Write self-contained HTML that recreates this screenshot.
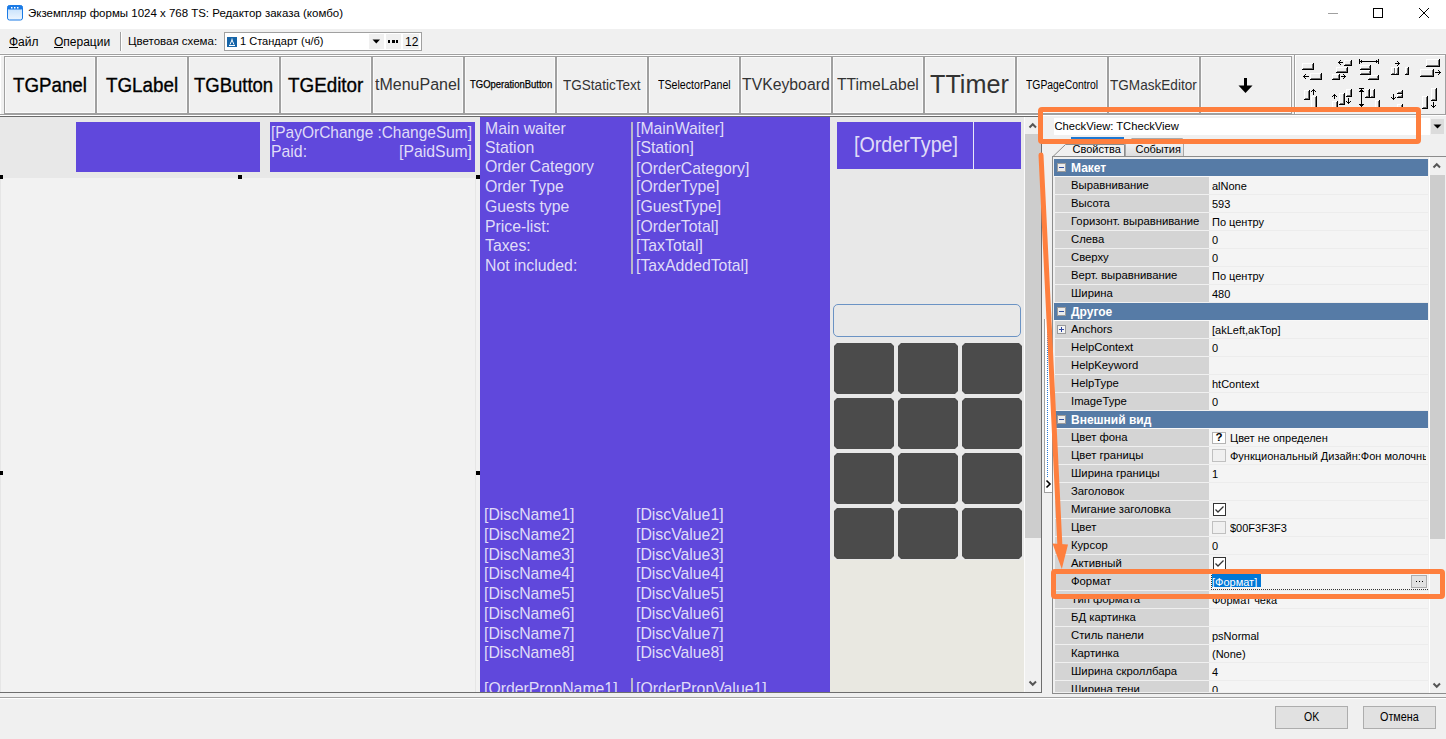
<!DOCTYPE html>
<html><head><meta charset="utf-8">
<style>
*{box-sizing:border-box}
html,body{margin:0;padding:0}
body{width:1446px;height:739px;overflow:hidden;position:relative;background:#f0f0f0;font-family:"Liberation Sans",sans-serif;color:#000}
.a{position:absolute}
.t{position:absolute;white-space:pre;line-height:1}
.tb{position:absolute;top:56px;height:58px;width:92px;border:1px solid #a0a0a0;background:#f0f0f0;box-shadow:inset 0 0 0 1px #fafafa}
.tb span{position:absolute;left:0;right:0;text-align:center;white-space:pre;line-height:1}
.pw{color:#fff;font-size:16px;letter-spacing:-0.25px}
.ins{font-size:11px}
.row{position:absolute;left:1055px;width:373px;height:18px}
.row .n{position:absolute;left:0;top:0;width:154px;height:17px;background:#d4d4d4}
.row .v{position:absolute;left:154px;top:0;width:219px;height:17px;background:#f4f4f4}
.row .ln{position:absolute;left:0;top:17px;width:154px;height:1px;background:#f0f0f0}
.row .lv{position:absolute;left:154px;top:17px;width:219px;height:1px;background:#ececec}
.row .nt{position:absolute;left:16px;top:2.6px;font-size:11.3px;white-space:pre;line-height:1}
.row .vt{position:absolute;left:157px;top:3.6px;font-size:11px;white-space:pre;line-height:1}
.hdr{position:absolute;left:1054px;width:374px;height:17px;background:#567ba6}
.hdr .bx{position:absolute;left:3px;top:4px;width:9px;height:9px;background:#ececec;border:1px solid #9a9a9a}
.hdr .bx:after{content:"";position:absolute;left:1px;top:3px;width:5px;height:1px;background:#3050a0}
.hdr span{position:absolute;left:17px;top:3px;color:#fff;font-weight:bold;font-size:12px;white-space:pre;line-height:1}
.btn{position:absolute;background:#4b4b4b;width:60px;height:51px;clip-path:polygon(3px 0,57px 0,60px 3px,60px 48px,57px 51px,3px 51px,0 48px,0 3px)}
</style></head><body>

<!-- title bar -->
<div class="a" style="left:0;top:0;width:1446px;height:29px;background:#fff"></div>
<svg class="a" style="left:7px;top:5px" width="17" height="16" viewBox="0 0 17 16">
  <defs><linearGradient id="ig" x1="0" y1="0" x2="0" y2="1"><stop offset="0" stop-color="#bcdcfb"/><stop offset="1" stop-color="#eef6ff"/></linearGradient></defs>
  <rect x="0.5" y="0.5" width="15" height="14.5" rx="2" fill="url(#ig)" stroke="#1b7be6"/>
  <rect x="0.5" y="0.5" width="15" height="4" rx="1.5" fill="#1b7be6"/>
  <rect x="4" y="2" width="1.5" height="1.5" fill="#fff"/><rect x="7" y="2" width="1.5" height="1.5" fill="#fff"/><rect x="10" y="2" width="1.5" height="1.5" fill="#fff"/>
</svg>
<div class="t" style="left:28px;top:7.8px;font-size:11.5px">Экземпляр формы 1024 x 768 TS: Редактор заказа (комбо)</div>
<div class="a" style="left:1328px;top:13px;width:10px;height:1px;background:#a0a0a0"></div>
<div class="a" style="left:1373px;top:8px;width:10px;height:10px;border:1px solid #000"></div>
<svg class="a" style="left:1418px;top:7px" width="12" height="12" viewBox="0 0 12 12"><path d="M1 1L11 11M11 1L1 11" stroke="#000" stroke-width="1"/></svg>

<!-- menu bar -->
<div class="t" style="left:9px;top:36px;font-size:12px">Файл</div>
<div class="a" style="left:9px;top:47px;width:9px;height:1px;background:#000"></div>
<div class="t" style="left:54px;top:36px;font-size:12px">Операции</div>
<div class="a" style="left:54px;top:47px;width:9px;height:1px;background:#000"></div>
<div class="a" style="left:120px;top:32px;width:1px;height:19px;background:#a0a0a0"></div>
<div class="a" style="left:121px;top:32px;width:1px;height:19px;background:#fff"></div>
<div class="t" style="left:128px;top:35.7px;font-size:11.5px">Цветовая схема:</div>
<div class="a" style="left:224px;top:32px;width:198px;height:19px;background:#fff;border:1px solid #a0a0a0"></div>
<div class="a" style="left:227px;top:37px;width:10px;height:10px;background:#1564a8"></div>
<svg class="a" style="left:227px;top:37px" width="10" height="10" viewBox="0 0 10 10"><path d="M5 1.5V3M3 7.5L5 3L7 7.5M2 8.5H8" stroke="#fff" stroke-width="1" fill="none"/></svg>
<div class="t" style="left:239.5px;top:35.7px;font-size:11.5px;transform:scaleX(0.96);transform-origin:0 0">1 Стандарт (ч/б)</div>
<div class="a" style="left:369px;top:34px;width:15px;height:15px;background:#f0f0f0"></div>
<svg class="a" style="left:372px;top:39px" width="9" height="5" viewBox="0 0 9 5"><path d="M0.5 0.5H8L4.25 4.5Z" fill="#000"/></svg>
<div class="a" style="left:386px;top:34px;width:15px;height:15px;background:#f0f0f0"></div>
<div class="a" style="left:388px;top:40px;width:2px;height:3px;background:#000"></div><div class="a" style="left:392px;top:40px;width:3px;height:3px;background:#000"></div><div class="a" style="left:396px;top:40px;width:2px;height:3px;background:#000"></div>
<div class="a" style="left:403px;top:34px;width:16px;height:15px;background:#f0f0f0"></div>
<div class="t" style="left:405px;top:36px;font-size:12px">12</div>

<!-- separator lines -->
<div class="a" style="left:0;top:53px;width:1446px;height:1px;background:#f7f7f7"></div>
<div class="a" style="left:0;top:54px;width:1446px;height:1px;background:#a0a0a0"></div>
<div class="a" style="left:0;top:55px;width:1446px;height:1px;background:#fff"></div>
<div class="a" style="left:0;top:56px;width:1px;height:58px;background:#fff"></div>

<!-- toolbar buttons -->
<div class="tb" style="left:4px"></div>
<div class="tb" style="left:96px"></div>
<div class="tb" style="left:188px"></div>
<div class="tb" style="left:280px"></div>
<div class="tb" style="left:372px"></div>
<div class="tb" style="left:464px"></div>
<div class="tb" style="left:556px"></div>
<div class="tb" style="left:648px"></div>
<div class="tb" style="left:740px"></div>
<div class="tb" style="left:832px"></div>
<div class="tb" style="left:924px"></div>
<div class="tb" style="left:1016px"></div>
<div class="tb" style="left:1108px"></div>
<div class="tb" style="left:1200px;width:92px"></div>
<div class="t" style="left:12.8px;top:74.55px;font-size:20.3px;-webkit-text-stroke:0.35px #000;transform:scaleX(0.924);transform-origin:0 0">TGPanel</div>
<div class="t" style="left:106px;top:74.55px;font-size:20.3px;-webkit-text-stroke:0.35px #000;transform:scaleX(0.927);transform-origin:0 0">TGLabel</div>
<div class="t" style="left:194px;top:74.55px;font-size:20.3px;-webkit-text-stroke:0.35px #000;transform:scaleX(0.912);transform-origin:0 0">TGButton</div>
<div class="t" style="left:287.7px;top:74.55px;font-size:20.3px;-webkit-text-stroke:0.35px #000;transform:scaleX(0.928);transform-origin:0 0">TGEditor</div>
<div class="t" style="left:375.2px;top:76.53px;font-size:16.7px;color:#333;transform:scaleX(0.959);transform-origin:0 0">tMenuPanel</div>
<div class="t" style="left:469.6px;top:79.70px;font-size:10.3px;-webkit-text-stroke:0.25px #000;transform:scaleX(0.92);transform-origin:0 0">TGOperationButton</div>
<div class="t" style="left:563.1px;top:77.63px;font-size:14.2px;color:#333;transform:scaleX(0.955);transform-origin:0 0">TGStaticText</div>
<div class="t" style="left:658px;top:78.02px;font-size:13px;transform:scaleX(0.818);transform-origin:0 0">TSelectorPanel</div>
<div class="t" style="left:741.9px;top:76.61px;font-size:16.8px;color:#333;transform:scaleX(0.94);transform-origin:0 0">TVKeyboard</div>
<div class="t" style="left:837.1px;top:76.61px;font-size:16.8px;color:#333;transform:scaleX(0.93);transform-origin:0 0">TTimeLabel</div>
<div class="t" style="left:930px;top:71.57px;font-size:25.2px;color:#333;transform:scaleX(1.0);transform-origin:0 0">TTimer</div>
<div class="t" style="left:1026.1px;top:78.60px;font-size:12.5px;transform:scaleX(0.83);transform-origin:0 0">TGPageControl</div>
<div class="t" style="left:1110px;top:77.71px;font-size:14.3px;color:#333;transform:scaleX(0.95);transform-origin:0 0">TGMaskEditor</div>
<svg class="a" style="left:1236px;top:76px" width="20" height="20" viewBox="0 0 20 20"><rect x="8" y="2" width="3" height="9" fill="#000"/><path d="M2.5 9.5H16.5L9.5 17Z" fill="#000"/></svg>

<!-- align panel -->
<div class="a" style="left:1294px;top:55px;width:152px;height:60px;border:1px solid #a0a0a0;border-top:none;background:#f0f0f0;box-shadow:inset 1px 1px 0 #fff"></div>
<svg class="a" style="left:0;top:0" width="1446" height="116" shape-rendering="crispEdges"><rect x="1302" y="63" width="12" height="7" fill="#fff"/><rect x="1303" y="64" width="10" height="5" fill="#f0f0f0"/><rect x="1303" y="68" width="10" height="1" fill="#707070"/><rect x="1312" y="64" width="1" height="5" fill="#707070"/><rect x="1302" y="69" width="12" height="1" fill="#000"/><rect x="1313" y="63" width="1" height="7" fill="#000"/><rect x="1303" y="76" width="6" height="1" fill="#000"/><rect x="1304" y="75" width="1" height="3" fill="#000"/><rect x="1305" y="74" width="1" height="1" fill="#000"/><rect x="1305" y="78" width="1" height="1" fill="#000"/><rect x="1310" y="73" width="12" height="7" fill="#fff"/><rect x="1311" y="74" width="10" height="5" fill="#f0f0f0"/><rect x="1311" y="78" width="10" height="1" fill="#707070"/><rect x="1320" y="74" width="1" height="5" fill="#707070"/><rect x="1310" y="79" width="12" height="1" fill="#000"/><rect x="1321" y="73" width="1" height="7" fill="#000"/><rect x="1338" y="62" width="5" height="1" fill="#000"/><rect x="1339" y="61" width="1" height="3" fill="#000"/><rect x="1340" y="60" width="1" height="1" fill="#000"/><rect x="1340" y="64" width="1" height="1" fill="#000"/><rect x="1344" y="60" width="8" height="6" fill="#fff"/><rect x="1345" y="61" width="6" height="4" fill="#f0f0f0"/><rect x="1345" y="64" width="6" height="1" fill="#707070"/><rect x="1350" y="61" width="1" height="4" fill="#707070"/><rect x="1344" y="65" width="8" height="1" fill="#000"/><rect x="1351" y="60" width="1" height="6" fill="#000"/><rect x="1336" y="67" width="12" height="6" fill="#fff"/><rect x="1337" y="68" width="10" height="4" fill="#f0f0f0"/><rect x="1337" y="71" width="10" height="1" fill="#707070"/><rect x="1346" y="68" width="1" height="4" fill="#707070"/><rect x="1336" y="72" width="12" height="1" fill="#000"/><rect x="1347" y="67" width="1" height="6" fill="#000"/><rect x="1332" y="74" width="8" height="6" fill="#fff"/><rect x="1333" y="75" width="6" height="4" fill="#f0f0f0"/><rect x="1333" y="78" width="6" height="1" fill="#707070"/><rect x="1338" y="75" width="1" height="4" fill="#707070"/><rect x="1332" y="79" width="8" height="1" fill="#000"/><rect x="1339" y="74" width="1" height="6" fill="#000"/><rect x="1341" y="76" width="5" height="1" fill="#000"/><rect x="1344" y="75" width="1" height="3" fill="#000"/><rect x="1343" y="74" width="1" height="1" fill="#000"/><rect x="1343" y="78" width="1" height="1" fill="#000"/><rect x="1359" y="61" width="20" height="1" fill="#000"/><rect x="1359" y="59" width="1" height="5" fill="#000"/><rect x="1378" y="59" width="1" height="5" fill="#000"/><rect x="1361" y="60" width="1" height="3" fill="#000"/><rect x="1376" y="60" width="1" height="3" fill="#000"/><rect x="1360" y="65" width="11" height="5" fill="#fff"/><rect x="1361" y="66" width="9" height="3" fill="#f0f0f0"/><rect x="1361" y="68" width="9" height="1" fill="#707070"/><rect x="1369" y="66" width="1" height="3" fill="#707070"/><rect x="1360" y="69" width="11" height="1" fill="#000"/><rect x="1370" y="65" width="1" height="5" fill="#000"/><rect x="1360" y="70" width="11" height="5" fill="#fff"/><rect x="1361" y="71" width="9" height="3" fill="#f0f0f0"/><rect x="1361" y="73" width="9" height="1" fill="#707070"/><rect x="1369" y="71" width="1" height="3" fill="#707070"/><rect x="1360" y="74" width="11" height="1" fill="#000"/><rect x="1370" y="70" width="1" height="5" fill="#000"/><rect x="1368" y="75" width="11" height="5" fill="#fff"/><rect x="1369" y="76" width="9" height="3" fill="#f0f0f0"/><rect x="1369" y="78" width="9" height="1" fill="#707070"/><rect x="1377" y="76" width="1" height="3" fill="#707070"/><rect x="1368" y="79" width="11" height="1" fill="#000"/><rect x="1378" y="75" width="1" height="5" fill="#000"/><rect x="1395" y="63" width="5" height="1" fill="#000"/><rect x="1398" y="62" width="1" height="3" fill="#000"/><rect x="1397" y="61" width="1" height="1" fill="#000"/><rect x="1397" y="65" width="1" height="1" fill="#000"/><rect x="1391" y="67" width="5" height="8" fill="#fff"/><rect x="1392" y="68" width="3" height="6" fill="#f0f0f0"/><rect x="1392" y="73" width="3" height="1" fill="#707070"/><rect x="1394" y="68" width="1" height="6" fill="#707070"/><rect x="1391" y="74" width="5" height="1" fill="#000"/><rect x="1395" y="67" width="1" height="8" fill="#000"/><rect x="1395" y="67" width="4" height="8" fill="#fff"/><rect x="1396" y="68" width="2" height="6" fill="#f0f0f0"/><rect x="1396" y="73" width="2" height="1" fill="#707070"/><rect x="1397" y="68" width="1" height="6" fill="#707070"/><rect x="1395" y="74" width="4" height="1" fill="#000"/><rect x="1398" y="67" width="1" height="8" fill="#000"/><rect x="1405" y="67" width="4" height="8" fill="#fff"/><rect x="1406" y="68" width="2" height="6" fill="#f0f0f0"/><rect x="1406" y="73" width="2" height="1" fill="#707070"/><rect x="1407" y="68" width="1" height="6" fill="#707070"/><rect x="1405" y="74" width="4" height="1" fill="#000"/><rect x="1408" y="67" width="1" height="8" fill="#000"/><rect x="1426" y="59" width="14" height="8" fill="#fff"/><rect x="1427" y="60" width="12" height="6" fill="#f0f0f0"/><rect x="1427" y="65" width="12" height="1" fill="#707070"/><rect x="1438" y="60" width="1" height="6" fill="#707070"/><rect x="1426" y="66" width="14" height="1" fill="#000"/><rect x="1439" y="59" width="1" height="8" fill="#000"/><rect x="1420" y="69" width="14" height="8" fill="#fff"/><rect x="1421" y="70" width="12" height="6" fill="#f0f0f0"/><rect x="1421" y="75" width="12" height="1" fill="#707070"/><rect x="1432" y="70" width="1" height="6" fill="#707070"/><rect x="1420" y="76" width="14" height="1" fill="#000"/><rect x="1433" y="69" width="1" height="8" fill="#000"/><rect x="1435" y="72" width="6" height="1" fill="#000"/><rect x="1439" y="71" width="1" height="3" fill="#000"/><rect x="1438" y="70" width="1" height="1" fill="#000"/><rect x="1438" y="74" width="1" height="1" fill="#000"/><rect x="1304" y="90" width="6" height="10" fill="#fff"/><rect x="1305" y="91" width="4" height="8" fill="#f0f0f0"/><rect x="1305" y="98" width="4" height="1" fill="#707070"/><rect x="1308" y="91" width="1" height="8" fill="#707070"/><rect x="1304" y="99" width="6" height="1" fill="#000"/><rect x="1309" y="90" width="1" height="10" fill="#000"/><rect x="1313" y="89" width="1" height="6" fill="#000"/><rect x="1312" y="90" width="3" height="1" fill="#000"/><rect x="1311" y="91" width="1" height="1" fill="#000"/><rect x="1315" y="91" width="1" height="1" fill="#000"/><rect x="1311" y="96" width="6" height="14" fill="#fff"/><rect x="1312" y="97" width="4" height="12" fill="#f0f0f0"/><rect x="1312" y="108" width="4" height="1" fill="#707070"/><rect x="1315" y="97" width="1" height="12" fill="#707070"/><rect x="1311" y="109" width="6" height="1" fill="#000"/><rect x="1316" y="96" width="1" height="14" fill="#000"/><rect x="1334" y="94" width="1" height="5" fill="#000"/><rect x="1333" y="95" width="3" height="1" fill="#000"/><rect x="1332" y="96" width="1" height="1" fill="#000"/><rect x="1336" y="96" width="1" height="1" fill="#000"/><rect x="1332" y="101" width="6" height="9" fill="#fff"/><rect x="1333" y="102" width="4" height="7" fill="#f0f0f0"/><rect x="1333" y="108" width="4" height="1" fill="#707070"/><rect x="1336" y="102" width="1" height="7" fill="#707070"/><rect x="1332" y="109" width="6" height="1" fill="#000"/><rect x="1337" y="101" width="1" height="9" fill="#000"/><rect x="1339" y="93" width="6" height="12" fill="#fff"/><rect x="1340" y="94" width="4" height="10" fill="#f0f0f0"/><rect x="1340" y="103" width="4" height="1" fill="#707070"/><rect x="1343" y="94" width="1" height="10" fill="#707070"/><rect x="1339" y="104" width="6" height="1" fill="#000"/><rect x="1344" y="93" width="1" height="12" fill="#000"/><rect x="1346" y="89" width="6" height="8" fill="#fff"/><rect x="1347" y="90" width="4" height="6" fill="#f0f0f0"/><rect x="1347" y="95" width="4" height="1" fill="#707070"/><rect x="1350" y="90" width="1" height="6" fill="#707070"/><rect x="1346" y="96" width="6" height="1" fill="#000"/><rect x="1351" y="89" width="1" height="8" fill="#000"/><rect x="1348" y="98" width="1" height="6" fill="#000"/><rect x="1347" y="102" width="3" height="1" fill="#000"/><rect x="1346" y="101" width="1" height="1" fill="#000"/><rect x="1350" y="101" width="1" height="1" fill="#000"/><rect x="1361" y="88" width="1" height="19" fill="#000"/><rect x="1359" y="88" width="5" height="1" fill="#000"/><rect x="1360" y="90" width="3" height="1" fill="#000"/><rect x="1359" y="91" width="5" height="1" fill="#000"/><rect x="1360" y="105" width="3" height="1" fill="#000"/><rect x="1359" y="104" width="5" height="1" fill="#000"/><rect x="1365" y="89" width="5" height="9" fill="#fff"/><rect x="1366" y="90" width="3" height="7" fill="#f0f0f0"/><rect x="1366" y="96" width="3" height="1" fill="#707070"/><rect x="1368" y="90" width="1" height="7" fill="#707070"/><rect x="1365" y="97" width="5" height="1" fill="#000"/><rect x="1369" y="89" width="1" height="9" fill="#000"/><rect x="1370" y="89" width="5" height="9" fill="#fff"/><rect x="1371" y="90" width="3" height="7" fill="#f0f0f0"/><rect x="1371" y="96" width="3" height="1" fill="#707070"/><rect x="1373" y="90" width="1" height="7" fill="#707070"/><rect x="1370" y="97" width="5" height="1" fill="#000"/><rect x="1374" y="89" width="1" height="9" fill="#000"/><rect x="1375" y="100" width="5" height="10" fill="#fff"/><rect x="1376" y="101" width="3" height="8" fill="#f0f0f0"/><rect x="1376" y="108" width="3" height="1" fill="#707070"/><rect x="1378" y="101" width="1" height="8" fill="#707070"/><rect x="1375" y="109" width="5" height="1" fill="#000"/><rect x="1379" y="100" width="1" height="10" fill="#000"/><rect x="1393" y="94" width="1" height="6" fill="#000"/><rect x="1392" y="98" width="3" height="1" fill="#000"/><rect x="1391" y="97" width="1" height="1" fill="#000"/><rect x="1395" y="97" width="1" height="1" fill="#000"/><rect x="1397" y="90" width="6" height="4" fill="#fff"/><rect x="1398" y="91" width="4" height="2" fill="#f0f0f0"/><rect x="1398" y="92" width="4" height="1" fill="#707070"/><rect x="1401" y="91" width="1" height="2" fill="#707070"/><rect x="1397" y="93" width="6" height="1" fill="#000"/><rect x="1402" y="90" width="1" height="4" fill="#000"/><rect x="1397" y="94" width="6" height="4" fill="#fff"/><rect x="1398" y="95" width="4" height="2" fill="#f0f0f0"/><rect x="1398" y="96" width="4" height="1" fill="#707070"/><rect x="1401" y="95" width="1" height="2" fill="#707070"/><rect x="1397" y="97" width="6" height="1" fill="#000"/><rect x="1402" y="94" width="1" height="4" fill="#000"/><rect x="1397" y="104" width="6" height="6" fill="#fff"/><rect x="1398" y="105" width="4" height="4" fill="#f0f0f0"/><rect x="1398" y="108" width="4" height="1" fill="#707070"/><rect x="1401" y="105" width="1" height="4" fill="#707070"/><rect x="1397" y="109" width="6" height="1" fill="#000"/><rect x="1402" y="104" width="1" height="6" fill="#000"/><rect x="1431" y="88" width="6" height="13" fill="#fff"/><rect x="1432" y="89" width="4" height="11" fill="#f0f0f0"/><rect x="1432" y="99" width="4" height="1" fill="#707070"/><rect x="1435" y="89" width="1" height="11" fill="#707070"/><rect x="1431" y="100" width="6" height="1" fill="#000"/><rect x="1436" y="88" width="1" height="13" fill="#000"/><rect x="1422" y="96" width="6" height="13" fill="#fff"/><rect x="1423" y="97" width="4" height="11" fill="#f0f0f0"/><rect x="1423" y="107" width="4" height="1" fill="#707070"/><rect x="1426" y="97" width="1" height="11" fill="#707070"/><rect x="1422" y="108" width="6" height="1" fill="#000"/><rect x="1427" y="96" width="1" height="13" fill="#000"/><rect x="1433" y="102" width="1" height="6" fill="#000"/><rect x="1432" y="106" width="3" height="1" fill="#000"/><rect x="1431" y="105" width="1" height="1" fill="#000"/><rect x="1435" y="105" width="1" height="1" fill="#000"/></svg>


<div class="a" style="left:0;top:114px;width:1446px;height:1px;background:#a0a0a0"></div>
<div class="a" style="left:0;top:115px;width:1446px;height:1px;background:#fff"></div>
<div class="a" style="left:0;top:116px;width:1042px;height:1px;background:#6a6a6a"></div>

<!-- canvas -->
<div class="a" style="left:0;top:117px;width:1025px;height:575px;background:#e8e8e8"></div>
<div class="a" style="left:0;top:178px;width:480px;height:514px;background:#f2f2f2;border-left:1px solid #e6e6e6"></div>
<div class="a" style="left:830px;top:560px;width:194px;height:132px;background:#e9e8e1"></div>

<div class="a" style="left:76px;top:122px;width:184px;height:50px;background:#6048dc"></div>
<div class="a" style="left:270px;top:122px;width:205px;height:50px;background:#6048dc"></div>

<!-- handles -->
<div class="a" style="left:-1px;top:175px;width:4px;height:4px;background:#000"></div>
<div class="a" style="left:238px;top:175px;width:4px;height:4px;background:#000"></div>
<div class="a" style="left:476px;top:175px;width:4px;height:4px;background:#000"></div>
<div class="a" style="left:-1px;top:471px;width:4px;height:4px;background:#000"></div>
<div class="a" style="left:475px;top:178px;width:1px;height:514px;background:#e6e6e6"></div>
<div class="a" style="left:476px;top:471px;width:4px;height:4px;background:#000"></div>

<!-- main purple -->
<div class="a" style="left:480px;top:117px;width:350px;height:575px;background:#6048dc"></div>
<div class="a" style="left:631px;top:122px;width:2px;height:152px;background:#b8b8c8"></div>
<div class="t" style="left:485px;top:119.68px;font-size:17px;color:#fff;transform:scaleX(0.93);transform-origin:0 0;color:rgba(255,255,255,0.82)">Main waiter</div>
<div class="t" style="left:485px;top:139.28px;font-size:17px;color:#fff;transform:scaleX(0.93);transform-origin:0 0;color:rgba(255,255,255,0.82)">Station</div>
<div class="t" style="left:485px;top:157.88px;font-size:17px;color:#fff;transform:scaleX(0.93);transform-origin:0 0;color:rgba(255,255,255,0.82)">Order Category</div>
<div class="t" style="left:485px;top:178.48px;font-size:17px;color:#fff;transform:scaleX(0.93);transform-origin:0 0;color:rgba(255,255,255,0.82)">Order Type</div>
<div class="t" style="left:485px;top:198.08px;font-size:17px;color:#fff;transform:scaleX(0.93);transform-origin:0 0;color:rgba(255,255,255,0.82)">Guests type</div>
<div class="t" style="left:485px;top:217.68px;font-size:17px;color:#fff;transform:scaleX(0.93);transform-origin:0 0;color:rgba(255,255,255,0.82)">Price-list:</div>
<div class="t" style="left:485px;top:237.28px;font-size:17px;color:#fff;transform:scaleX(0.93);transform-origin:0 0;color:rgba(255,255,255,0.82)">Taxes:</div>
<div class="t" style="left:485px;top:256.88px;font-size:17px;color:#fff;transform:scaleX(0.93);transform-origin:0 0;color:rgba(255,255,255,0.82)">Not included:</div>
<div class="t" style="left:636px;top:119.68px;font-size:17px;color:#fff;transform:scaleX(0.93);transform-origin:0 0;color:rgba(255,255,255,0.82)">[MainWaiter]</div>
<div class="t" style="left:636px;top:139.28px;font-size:17px;color:#fff;transform:scaleX(0.93);transform-origin:0 0;color:rgba(255,255,255,0.82)">[Station]</div>
<div class="t" style="left:636px;top:159.88px;font-size:17px;color:#fff;transform:scaleX(0.93);transform-origin:0 0;color:rgba(255,255,255,0.82)">[OrderCategory]</div>
<div class="t" style="left:636px;top:178.48px;font-size:17px;color:#fff;transform:scaleX(0.93);transform-origin:0 0;color:rgba(255,255,255,0.82)">[OrderType]</div>
<div class="t" style="left:636px;top:198.08px;font-size:17px;color:#fff;transform:scaleX(0.93);transform-origin:0 0;color:rgba(255,255,255,0.82)">[GuestType]</div>
<div class="t" style="left:636px;top:217.68px;font-size:17px;color:#fff;transform:scaleX(0.93);transform-origin:0 0;color:rgba(255,255,255,0.82)">[OrderTotal]</div>
<div class="t" style="left:636px;top:237.28px;font-size:17px;color:#fff;transform:scaleX(0.93);transform-origin:0 0;color:rgba(255,255,255,0.82)">[TaxTotal]</div>
<div class="t" style="left:636px;top:256.88px;font-size:17px;color:#fff;transform:scaleX(0.93);transform-origin:0 0;color:rgba(255,255,255,0.82)">[TaxAddedTotal]</div>
<div class="t" style="left:484px;top:506.08px;font-size:17px;color:#fff;transform:scaleX(0.93);transform-origin:0 0;color:rgba(255,255,255,0.82)">[DiscName1]</div>
<div class="t" style="left:636px;top:506.08px;font-size:17px;color:#fff;transform:scaleX(0.93);transform-origin:0 0;color:rgba(255,255,255,0.82)">[DiscValue1]</div>
<div class="t" style="left:484px;top:525.84px;font-size:17px;color:#fff;transform:scaleX(0.93);transform-origin:0 0;color:rgba(255,255,255,0.82)">[DiscName2]</div>
<div class="t" style="left:636px;top:525.84px;font-size:17px;color:#fff;transform:scaleX(0.93);transform-origin:0 0;color:rgba(255,255,255,0.82)">[DiscValue2]</div>
<div class="t" style="left:484px;top:545.60px;font-size:17px;color:#fff;transform:scaleX(0.93);transform-origin:0 0;color:rgba(255,255,255,0.82)">[DiscName3]</div>
<div class="t" style="left:636px;top:545.60px;font-size:17px;color:#fff;transform:scaleX(0.93);transform-origin:0 0;color:rgba(255,255,255,0.82)">[DiscValue3]</div>
<div class="t" style="left:484px;top:565.36px;font-size:17px;color:#fff;transform:scaleX(0.93);transform-origin:0 0;color:rgba(255,255,255,0.82)">[DiscName4]</div>
<div class="t" style="left:636px;top:565.36px;font-size:17px;color:#fff;transform:scaleX(0.93);transform-origin:0 0;color:rgba(255,255,255,0.82)">[DiscValue4]</div>
<div class="t" style="left:484px;top:585.12px;font-size:17px;color:#fff;transform:scaleX(0.93);transform-origin:0 0;color:rgba(255,255,255,0.82)">[DiscName5]</div>
<div class="t" style="left:636px;top:585.12px;font-size:17px;color:#fff;transform:scaleX(0.93);transform-origin:0 0;color:rgba(255,255,255,0.82)">[DiscValue5]</div>
<div class="t" style="left:484px;top:604.88px;font-size:17px;color:#fff;transform:scaleX(0.93);transform-origin:0 0;color:rgba(255,255,255,0.82)">[DiscName6]</div>
<div class="t" style="left:636px;top:604.88px;font-size:17px;color:#fff;transform:scaleX(0.93);transform-origin:0 0;color:rgba(255,255,255,0.82)">[DiscValue6]</div>
<div class="t" style="left:484px;top:624.64px;font-size:17px;color:#fff;transform:scaleX(0.93);transform-origin:0 0;color:rgba(255,255,255,0.82)">[DiscName7]</div>
<div class="t" style="left:636px;top:624.64px;font-size:17px;color:#fff;transform:scaleX(0.93);transform-origin:0 0;color:rgba(255,255,255,0.82)">[DiscValue7]</div>
<div class="t" style="left:484px;top:644.40px;font-size:17px;color:#fff;transform:scaleX(0.93);transform-origin:0 0;color:rgba(255,255,255,0.82)">[DiscName8]</div>
<div class="t" style="left:636px;top:644.40px;font-size:17px;color:#fff;transform:scaleX(0.93);transform-origin:0 0;color:rgba(255,255,255,0.82)">[DiscValue8]</div>
<div class="a" style="left:480px;top:677px;width:350px;height:15px;overflow:hidden"><div class="t" style="left:4px;top:3.28px;font-size:17px;color:#fff;transform:scaleX(0.93);transform-origin:0 0;color:rgba(255,255,255,0.82)">[OrderPropName1]</div>
<div class="t" style="left:156px;top:3.28px;font-size:17px;color:#fff;transform:scaleX(0.93);transform-origin:0 0;color:rgba(255,255,255,0.82)">[OrderPropValue1]</div>
<div class="a" style="left:151px;top:1px;width:2px;height:15px;background:#b8b8c8"></div></div>
<div class="t" style="left:271px;top:124.18px;font-size:17px;color:#fff;transform:scaleX(0.91);transform-origin:0 0;color:rgba(255,255,255,0.82)">[PayOrChange</div>
<div class="t" style="left:321.5px;top:124.18px;width:150px;text-align:right;font-size:17px;color:#fff;transform:scaleX(0.91);transform-origin:100% 0;color:rgba(255,255,255,0.82)">:ChangeSum]</div>
<div class="t" style="left:271px;top:143.28px;font-size:17px;color:#fff;transform:scaleX(0.93);transform-origin:0 0;color:rgba(255,255,255,0.82)">Paid:</div>
<div class="t" style="left:321.5px;top:143.28px;width:150px;text-align:right;font-size:17px;color:#fff;transform:scaleX(0.93);transform-origin:100% 0;color:rgba(255,255,255,0.82)">[PaidSum]</div>


<!-- right canvas column -->
<div class="a" style="left:837px;top:122px;width:184px;height:47px;background:#6048dc"></div>
<div class="a" style="left:973px;top:122px;width:1px;height:47px;background:#e8e8f8"></div>
<div class="t" style="left:854px;top:134.21px;font-size:21.2px;color:#fff;transform:scaleX(0.93);transform-origin:0 0;color:rgba(255,255,255,0.82)">[OrderType]</div>

<div class="a" style="left:833px;top:304px;width:188px;height:33px;border:1px solid #6b93c4;border-radius:5px;background:#e8e8e8"></div>
<div class="btn" style="left:834px;top:343px"></div>
<div class="btn" style="left:898px;top:343px"></div>
<div class="btn" style="left:962px;top:343px"></div>
<div class="btn" style="left:834px;top:398px"></div>
<div class="btn" style="left:898px;top:398px"></div>
<div class="btn" style="left:962px;top:398px"></div>
<div class="btn" style="left:834px;top:453px"></div>
<div class="btn" style="left:898px;top:453px"></div>
<div class="btn" style="left:962px;top:453px"></div>
<div class="btn" style="left:834px;top:508px"></div>
<div class="btn" style="left:898px;top:508px"></div>
<div class="btn" style="left:962px;top:508px"></div>


<!-- canvas scrollbar -->
<div class="a" style="left:1024px;top:117px;width:1px;height:575px;background:#fbfbfb"></div>
<div class="a" style="left:1025px;top:117px;width:16px;height:575px;background:#f0f0f0"></div>
<div class="a" style="left:1025px;top:134px;width:16px;height:404px;background:#cdcdcd"></div>
<svg class="a" style="left:1028px;top:121.5px" width="10" height="7" viewBox="0 0 10 7"><path d="M1.5 5.5L4.75 2.25L8 5.5" stroke="#555" stroke-width="2" fill="none"/></svg>
<svg class="a" style="left:1028px;top:680px" width="10" height="7" viewBox="0 0 10 7"><path d="M1.5 1.5L4.75 4.75L8 1.5" stroke="#555" stroke-width="2" fill="none"/></svg>
<div class="a" style="left:1041px;top:117px;width:1px;height:576px;background:#6e6e6e"></div>

<!-- bottom lines -->
<div class="a" style="left:0;top:692px;width:1042px;height:1px;background:#6e6e6e"></div>
<div class="a" style="left:0;top:697px;width:1446px;height:1px;background:#a0a0a0"></div>
<div class="a" style="left:0;top:698px;width:1446px;height:1px;background:#fff"></div>

<!-- inspector -->
<div class="a" style="left:1054px;top:118px;width:376px;height:17px;background:#fff"></div>
<div class="t" style="left:1054.5px;top:120.5px;font-size:11.2px;color:#000;">CheckView: TCheckView</div>
<div class="a" style="left:1431px;top:119px;width:13px;height:15px;background:#dcdcdc"></div>
<svg class="a" style="left:1433px;top:124px" width="9" height="5" viewBox="0 0 9 5"><path d="M0.5 0.5H8.5L4.5 4.5Z" fill="#000"/></svg>
<div class="a" style="left:1071px;top:137px;width:53px;height:2px;background:#1f78d1"></div>
<svg class="a" style="left:1052px;top:137px" width="140" height="21" viewBox="0 0 140 21"><defs><linearGradient id="tg" x1="0" y1="0" x2="0" y2="1"><stop offset="0" stop-color="#fafafa"/><stop offset="1" stop-color="#dcdcdc"/></linearGradient></defs><path d="M73.5 20V7.5L80 1.5H130.5L131.5 2.5V20" fill="url(#tg)" stroke="#a8a8a8"/><path d="M0.5 20L13.5 7.5H72.5V20" fill="#f0f0f0" stroke="#8c8c8c" stroke-width="1"/></svg>
<div class="t" style="left:1072.5px;top:144.0px;font-size:11px;color:#000;">Свойства</div>
<div class="t" style="left:1135.5px;top:144.0px;font-size:11px;color:#000;">События</div>
<div class="a" style="left:1052px;top:156px;width:394px;height:538px;border:1px solid #8c8c8c;border-right:none;background:#f0f0f0"></div>
<div class="a" style="left:1428px;top:157px;width:18px;height:536px;background:#f0f0f0"></div>
<div class="a" style="left:1429px;top:157px;width:1px;height:536px;background:#fff"></div>
<div class="a" style="left:1430px;top:175px;width:15px;height:364px;background:#cdcdcd"></div>
<svg class="a" style="left:1432px;top:162px" width="10" height="7" viewBox="0 0 10 7"><path d="M1.5 5.5L4.75 2.25L8 5.5" stroke="#555" stroke-width="2" fill="none"/></svg>
<svg class="a" style="left:1432px;top:682px" width="10" height="7" viewBox="0 0 10 7"><path d="M1.5 1.5L4.75 4.75L8 1.5" stroke="#555" stroke-width="2" fill="none"/></svg>
<div class="a" style="left:0;top:157px;width:1428px;height:535px;overflow:hidden">
<div class="hdr" style="top:2px"><div class="bx"></div><span>Макет</span></div>
<div class="a" style="left:1054px;top:19px;width:374px;height:1px;background:#f8f8f8"></div>
<div class="row" style="top:20px"><div class="n"></div><div class="v"></div><div class="ln"></div><div class="lv"></div><div class="nt">Выравнивание</div><div class="vt">alNone</div></div>
<div class="row" style="top:38px"><div class="n"></div><div class="v"></div><div class="ln"></div><div class="lv"></div><div class="nt">Высота</div><div class="vt">593</div></div>
<div class="row" style="top:56px"><div class="n"></div><div class="v"></div><div class="ln"></div><div class="lv"></div><div class="nt">Горизонт. выравнивание</div><div class="vt">По центру</div></div>
<div class="row" style="top:74px"><div class="n"></div><div class="v"></div><div class="ln"></div><div class="lv"></div><div class="nt">Слева</div><div class="vt">0</div></div>
<div class="row" style="top:92px"><div class="n"></div><div class="v"></div><div class="ln"></div><div class="lv"></div><div class="nt">Сверху</div><div class="vt">0</div></div>
<div class="row" style="top:110px"><div class="n"></div><div class="v"></div><div class="ln"></div><div class="lv"></div><div class="nt">Верт. выравнивание</div><div class="vt">По центру</div></div>
<div class="row" style="top:128px"><div class="n"></div><div class="v"></div><div class="ln"></div><div class="lv"></div><div class="nt">Ширина</div><div class="vt">480</div></div>
<div class="hdr" style="top:146px"><div class="bx"></div><span>Другое</span></div>
<div class="a" style="left:1054px;top:163px;width:374px;height:1px;background:#f8f8f8"></div>
<div class="row" style="top:164px"><div class="n"></div><div class="v"></div><div class="ln"></div><div class="lv"></div><div class="nt">Anchors</div><div class="a" style="left:2px;top:4px;width:9px;height:9px;background:#f4f4f4;border:1px solid #9a9a9a"></div><div class="a" style="left:4px;top:8px;width:5px;height:1px;background:#3048a0"></div><div class="a" style="left:6px;top:6px;width:1px;height:5px;background:#3048a0"></div><div class="vt">[akLeft,akTop]</div></div>
<div class="row" style="top:182px"><div class="n"></div><div class="v"></div><div class="ln"></div><div class="lv"></div><div class="nt">HelpContext</div><div class="vt">0</div></div>
<div class="row" style="top:200px"><div class="n"></div><div class="v"></div><div class="ln"></div><div class="lv"></div><div class="nt">HelpKeyword</div><div class="vt"></div></div>
<div class="row" style="top:218px"><div class="n"></div><div class="v"></div><div class="ln"></div><div class="lv"></div><div class="nt">HelpType</div><div class="vt">htContext</div></div>
<div class="row" style="top:236px"><div class="n"></div><div class="v"></div><div class="ln"></div><div class="lv"></div><div class="nt">ImageType</div><div class="vt">0</div></div>
<div class="hdr" style="top:254px"><div class="bx"></div><span>Внешний вид</span></div>
<div class="a" style="left:1054px;top:271px;width:374px;height:1px;background:#f8f8f8"></div>
<div class="row" style="top:272px"><div class="n"></div><div class="v"></div><div class="ln"></div><div class="lv"></div><div class="nt">Цвет фона</div><div class="a" style="left:157px;top:3px;width:14px;height:12px;background:#fff;border:1px solid #b4b4b4"></div><div class="t" style="left:160.5px;top:3px;font-size:11.5px;font-weight:bold">?</div><div class="vt" style="left:175px">Цвет не определен</div></div>
<div class="row" style="top:290px"><div class="n"></div><div class="v"></div><div class="ln"></div><div class="lv"></div><div class="nt">Цвет границы</div><div class="a" style="left:157px;top:2px;width:14px;height:13px;background:#f0f0f0;border:1px solid #c0c0c0"></div><div class="vt" style="left:175px;width:196px;overflow:hidden;text-overflow:clip">Функциональный Дизайн:Фон молочный</div></div>
<div class="row" style="top:308px"><div class="n"></div><div class="v"></div><div class="ln"></div><div class="lv"></div><div class="nt">Ширина границы</div><div class="vt">1</div></div>
<div class="row" style="top:326px"><div class="n"></div><div class="v"></div><div class="ln"></div><div class="lv"></div><div class="nt">Заголовок</div><div class="vt"></div></div>
<div class="row" style="top:344px"><div class="n"></div><div class="v"></div><div class="ln"></div><div class="lv"></div><div class="nt">Мигание заголовка</div><div class="a" style="left:158px;top:2px;width:13px;height:13px;background:#fff;border:1px solid #333"></div><svg class="a" style="left:158px;top:2px" width="13" height="13" viewBox="0 0 13 13"><path d="M2.5 6.5L5 9L10.5 3.5" stroke="#333" stroke-width="1.3" fill="none"/></svg></div>
<div class="row" style="top:362px"><div class="n"></div><div class="v"></div><div class="ln"></div><div class="lv"></div><div class="nt">Цвет</div><div class="a" style="left:157px;top:2px;width:14px;height:13px;background:#f0f0f0;border:1px solid #c0c0c0"></div><div class="vt" style="left:175px;width:196px;overflow:hidden;text-overflow:clip">$00F3F3F3</div></div>
<div class="row" style="top:380px"><div class="n"></div><div class="v"></div><div class="ln"></div><div class="lv"></div><div class="nt">Курсор</div><div class="vt">0</div></div>
<div class="row" style="top:398px"><div class="n"></div><div class="v"></div><div class="ln"></div><div class="lv"></div><div class="nt">Активный</div><div class="a" style="left:158px;top:2px;width:13px;height:13px;background:#fff;border:1px solid #333"></div><svg class="a" style="left:158px;top:2px" width="13" height="13" viewBox="0 0 13 13"><path d="M2.5 6.5L5 9L10.5 3.5" stroke="#333" stroke-width="1.3" fill="none"/></svg></div>
<div class="row" style="top:416px"><div class="n"></div><div class="v"></div><div class="ln"></div><div class="lv"></div><div class="nt">Формат</div><div class="a" style="left:156px;top:0px;width:217px;height:17px;border:1px dotted #333;border-top:none;border-right:none"></div><div class="a" style="left:157px;top:1px;width:49px;height:13px;background:#0078d7"></div><div class="vt" style="left:157px;color:#fff">[Формат]</div><div class="a" style="left:356px;top:2px;width:16px;height:13px;background:#e1e1e1;border:1px solid #adadad"></div><div class="a" style="left:361px;top:8px;width:1px;height:1px;background:#000"></div><div class="a" style="left:364px;top:8px;width:1px;height:1px;background:#000"></div><div class="a" style="left:367px;top:8px;width:1px;height:1px;background:#000"></div></div>
<div class="row" style="top:434px"><div class="n"></div><div class="v"></div><div class="ln"></div><div class="lv"></div><div class="nt">Тип формата</div><div class="vt">Формат чека</div></div>
<div class="row" style="top:452px"><div class="n"></div><div class="v"></div><div class="ln"></div><div class="lv"></div><div class="nt">БД картинка</div><div class="vt"></div></div>
<div class="row" style="top:470px"><div class="n"></div><div class="v"></div><div class="ln"></div><div class="lv"></div><div class="nt">Стиль панели</div><div class="vt">psNormal</div></div>
<div class="row" style="top:488px"><div class="n"></div><div class="v"></div><div class="ln"></div><div class="lv"></div><div class="nt">Картинка</div><div class="vt">(None)</div></div>
<div class="row" style="top:506px"><div class="n"></div><div class="v"></div><div class="ln"></div><div class="lv"></div><div class="nt">Ширина скроллбара</div><div class="vt">4</div></div>
<div class="row" style="top:524px"><div class="n"></div><div class="v"></div><div class="ln"></div><div class="lv"></div><div class="nt">Ширина тени</div><div class="vt">0</div></div>
</div>


<!-- bottom buttons -->
<div class="a" style="left:1275px;top:706px;width:73px;height:23px;background:#e1e1e1;border:1px solid #adadad"></div>
<div class="t" style="left:1303.5px;top:710.5px;font-size:12px;transform:scaleX(0.88);transform-origin:0 0">OK</div>
<div class="a" style="left:1363px;top:706px;width:73px;height:23px;background:#e1e1e1;border:1px solid #adadad"></div>
<div class="t" style="left:1379.5px;top:710.5px;font-size:12px;transform:scaleX(0.9);transform-origin:0 0">Отмена</div>

<div class="a" style="left:1044px;top:319px;width:8px;height:174px;background:#fff;border-left:1px solid #a0a0a0;border-bottom:1px solid #a0a0a0"></div>
<div class="a" style="left:1047px;top:322px;width:0;height:155px;border-left:1px dotted #2a7ad4"></div>
<svg class="a" style="left:1045px;top:479px" width="7" height="10" viewBox="0 0 7 10"><path d="M1.5 1.5L5 5L1.5 8.5" stroke="#000" stroke-width="1.6" fill="none"/></svg>
<div class="a" style="left:1038px;top:107px;width:383px;height:37px;border:5px solid #fe7f3e;border-radius:4px"></div>
<div class="a" style="left:1051px;top:569px;width:394px;height:30px;border:5px solid #fe7f3e;border-radius:4px"></div>
<svg class="a" style="left:0;top:0" width="1446" height="739"><path d="M1041 155L1060 548" stroke="#fe7f3e" stroke-width="5" stroke-linecap="round"/><path d="M1052.5 543.5L1068 544.5L1061.8 569Z" fill="#fe7f3e"/></svg>

</body></html>
